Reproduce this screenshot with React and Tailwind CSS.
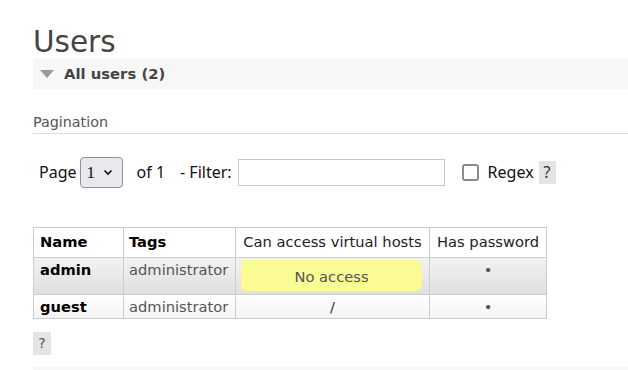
import React from "react";

const V = { fontFamily: '"DejaVu Sans", Verdana, sans-serif' };
const S = { fontFamily: '"Noto Sans", "Open Sans", sans-serif' };

export default function App() {
  return (
    <div className="w-[628px] h-[370px] overflow-hidden bg-white pl-[33px]" style={V}>
      <h1 className="pt-[26px] text-[29.5px] leading-[33px] text-[#444]" style={V}>Users</h1>
      <div className="h-[30px] bg-[#f7f7f7] flex items-center -mr-[10px]">
        <svg width="14" height="9" viewBox="0 0 14 9" className="ml-[7px]">
          <path d="M0 0 L14 0 L7 8 Z" fill="#999" />
        </svg>
        <span className="ml-[10px] text-[14.8px] font-bold text-[#444]">All users (2)</span>
      </div>
      <div className="mt-[23px] h-[22px] leading-[20px] text-[14.3px] text-[#555] border-b border-[#ddd]">Pagination</div>
      <div className="mt-[22px] h-[32px] flex items-center pl-[6px] text-[16px] text-[#111]" style={S}>
        <span>Page</span>
        <div className="ml-[3px] w-[43px] h-[31px] rounded-[4px] border border-[#8f8f9d] bg-[#e9e9ed] flex items-center pl-[6px]">
          <span className="text-[17px] leading-none" style={{ fontFamily: '"Liberation Serif", serif' }}>1</span>
          <svg width="10" height="7" viewBox="0 0 10 7" className="ml-[8px]">
            <path d="M1.5 1.5 L5 5 L8.5 1.5" stroke="#111" strokeWidth="1.6" fill="none" />
          </svg>
        </div>
        <span className="ml-[14px]">of 1</span>
        <span className="ml-[15px]">- Filter:</span>
        <div className="ml-[6px] w-[207px] h-[27px] border border-[#c8c8c8] bg-white"></div>
        <div className="ml-[17px] w-[17px] h-[17px] rounded-[3px] border-2 border-[#8a8a96] bg-white"></div>
        <span className="ml-[9px]">Regex</span>
        <span className="ml-[5px] w-[17px] h-[23px] bg-[#e4e4e4] flex items-center justify-center text-[#333]">?</span>
      </div>
      <table className="mt-[39px] border-collapse text-[14.7px]" style={V}>
        <thead>
          <tr className="h-[30px]">
            <th className="w-[90px] border border-[#ccc] px-[6px] text-left font-bold text-black">Name</th>
            <th className="w-[112px] border border-[#ccc] px-[5px] text-left font-bold text-black">Tags</th>
            <th className="w-[194px] border border-[#ccc] px-[5px] text-center font-normal text-[#222]">Can access virtual hosts</th>
            <th className="w-[117px] border border-[#ccc] px-[5px] text-center font-normal text-[#222]">Has password</th>
          </tr>
        </thead>
        <tbody>
          <tr className="h-[37px] bg-gradient-to-b from-[#f2f2f2] to-[#dfdfdf]">
            <td className="border border-[#ccc] px-[6px] pt-[2px] align-top font-bold text-black leading-[20px]">admin</td>
            <td className="border border-[#ccc] px-[5px] pt-[2px] align-top text-[#555] leading-[20px]">administrator</td>
            <td className="border border-[#ccc] pl-[5px] pr-[7px] py-[2px] align-top">
              <div className="h-[31px] rounded-[6px] bg-[#fbfb95] flex items-center justify-center pt-[3px] text-[#555]">No access</div>
            </td>
            <td className="border border-[#ccc] pt-[2px] align-top text-center text-[#555] leading-[20px]">•</td>
          </tr>
          <tr className="h-[24px] bg-gradient-to-b from-white to-[#f3f3f3]">
            <td className="border border-[#ccc] px-[6px] font-bold text-black leading-[20px]">guest</td>
            <td className="border border-[#ccc] px-[5px] text-[#555] leading-[20px]">administrator</td>
            <td className="border border-[#ccc] text-center text-[#333] leading-[20px]">/</td>
            <td className="border border-[#ccc] text-center text-[#555] leading-[20px]">•</td>
          </tr>
        </tbody>
      </table>
      <div className="mt-[13px] w-[18px] h-[23px] bg-[#e4e4e4] flex items-center justify-center text-[14px] text-[#555]">?</div>
      <div className="mt-[12px] h-[20px] bg-[#f7f7f7] -mr-[10px]"></div>
    </div>
  );
}
